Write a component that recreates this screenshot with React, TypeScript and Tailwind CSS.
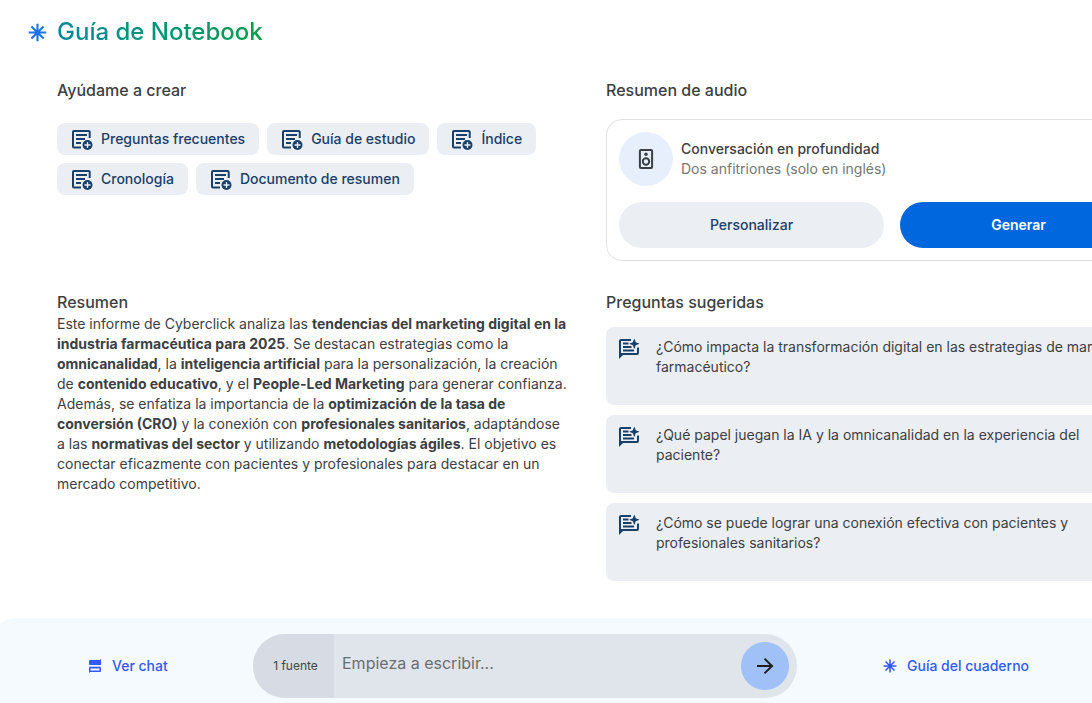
import React from "react";

function Asterisk({ className }: { className: string }) {
  return (
    <svg viewBox="0 0 20 20" className={className} fill="none" stroke="currentColor" strokeWidth="2.2" aria-hidden="true">
      <path d="M10 .8v18.4M.8 10h18.4M3.6 3.6l12.8 12.8M16.4 3.6L3.6 16.4" />
    </svg>
  );
}

function NoteAddIcon() {
  return (
    <svg viewBox="0 0 22 22" className="size-[22px] shrink-0" fill="none" aria-hidden="true">
      <path d="M18.700 10V4a1 1 0 0 0-1-1H3a1 1 0 0 0-1 1v14.500a1 1 0 0 0 1 1h7" stroke="currentColor" strokeWidth="2" />
      <path d="M5 7h11M5 11h9M5 15h5" stroke="currentColor" strokeWidth="2" />
      <circle cx="16.500" cy="17" r="5" fill="currentColor" />
      <path d="M16.500 14v6M13.500 17h6" stroke="#edf0f5" strokeWidth="1.300" />
    </svg>
  );
}

function ChatSparkIcon() {
  return (
    <svg viewBox="0 0 22 22" className="size-[22px] shrink-0" fill="none" aria-hidden="true">
      <path d="M13 3H3a1 1 0 0 0-1 1v14l2-1h15a1 1 0 0 0 1-1v-5.500" stroke="currentColor" strokeWidth="2" />
      <path d="M1 16v6l4.500-4.500z" fill="currentColor" />
      <path d="M5 6.500h5.500M5 10h8.500M5 13.500h11" stroke="currentColor" strokeWidth="2" />
      <path d="M16.300 1.500l1.500 3.700 3.700 1.500-3.700 1.500-1.500 3.700-1.500-3.700-3.700-1.500 3.700-1.500z" fill="currentColor" />
    </svg>
  );
}

function SpeakerIcon() {
  return (
    <svg viewBox="0 0 16 22" className="h-[22px] w-4" fill="none" stroke="currentColor" strokeWidth="2" aria-hidden="true">
      <rect x="1.900" y="1.900" width="12.200" height="18.200" rx="1" />
      <circle cx="8" cy="13.500" r="3.200" />
      <circle cx="8" cy="6.300" r="1.700" fill="currentColor" stroke="none" />
    </svg>
  );
}

function ChatStackIcon() {
  return (
    <svg viewBox="0 0 14 14" className="size-3.5" fill="currentColor" aria-hidden="true">
      <path d="M13 0v6H2a1 1 0 0 1-1-1V2a1 1 0 0 1 1-1h9.500z" />
      <path d="M1 7h12v1H1z" opacity=".3" />
      <path fillRule="evenodd" d="M1 14V9a1 1 0 0 1 1-1h10a1 1 0 0 1 1 1v3a1 1 0 0 1-1 1H2.200zM2.500 9.600v1.800h9V9.600z" />
    </svg>
  );
}

const chips = ["Preguntas frecuentes", "Guía de estudio", "Índice", "Cronología", "Documento de resumen"];

const questions = [
  "¿Cómo impacta la transformación digital en las estrategias de marketing farmacéutico?",
  "¿Qué papel juegan la IA y la omnicanalidad en la experiencia del paciente?",
  "¿Cómo se puede lograr una conexión efectiva con pacientes y profesionales sanitarios?",
];

export default function App() {
  return (
    <div className="flex min-h-screen flex-col overflow-x-hidden bg-white font-['Inter','Liberation_Sans',sans-serif] text-sm text-[#3c4043]">
      <header className="flex h-16 items-center gap-2.5 pl-7">
        <Asterisk className="size-[19px] text-[#1a73e8]" />
        <h1 className="bg-linear-to-r from-[#078a9b] to-[#0a9e47] bg-clip-text text-2xl font-medium text-transparent">
          Guía de Notebook
        </h1>
      </header>

      <main className="-mr-[86px] grid flex-1 grid-cols-[minmax(0,1fr)_572px] grid-rows-[auto_1fr] gap-x-8 pt-3.5 pl-[57px]">
        <section className="pb-[29px]">
          <h2 className="text-base leading-6 font-medium">Ayúdame a crear</h2>
          <div className="mt-[21px] flex flex-wrap gap-2">
            {chips.map((c) => (
              <button key={c} className="flex h-8 items-center gap-2 rounded-lg bg-[#ebeef3] px-3.5 font-medium text-[#194069]">
                <NoteAddIcon />
                {c}
              </button>
            ))}
          </div>
        </section>

        <section className="pb-[29px]">
          <h2 className="text-base leading-6 font-medium">Resumen de audio</h2>
          <div className="mt-[17px] rounded-2xl border border-[#dfe1e3] p-3">
            <div className="flex items-center gap-2">
              <span className="grid size-[54px] place-items-center rounded-full bg-[#e8effc]">
                <SpeakerIcon />
              </span>
              <div className="leading-5">
                <h3 className="font-medium">Conversación en profundidad</h3>
                <p className="text-[#747775]">Dos anfitriones (solo en inglés)</p>
              </div>
            </div>
            <div className="mt-4 grid grid-cols-2 gap-4 font-medium">
              <button className="h-[46px] rounded-full bg-[#ebeef3] text-[#194069]">Personalizar</button>
              <button className="h-[46px] rounded-full bg-[#0067df] pr-7 font-semibold text-white">Generar</button>
            </div>
          </div>
        </section>

        <section>
          <h2 className="text-base leading-6 font-medium">Resumen</h2>
          <p className="pr-1 leading-5">
            Este informe de Cyberclick analiza las <b>tendencias del marketing digital en la industria farmacéutica para 2025</b>. Se
            destacan estrategias como la <b>omnicanalidad</b>, la <b>inteligencia artificial</b> para la personalización, la creación de{" "}
            <b>contenido educativo</b>, y el <b>People-Led Marketing</b> para generar confianza. Además, se enfatiza la importancia de la{" "}
            <b>optimización de la tasa de conversión (CRO)</b> y la conexión con <b>profesionales sanitarios</b>, adaptándose a las{" "}
            <b>normativas del sector</b> y utilizando <b>metodologías ágiles</b>. El objetivo es conectar eficazmente con pacientes y
            profesionales para destacar en un mercado competitivo.
          </p>
        </section>

        <section>
          <h2 className="text-base leading-6 font-medium">Preguntas sugeridas</h2>
          <div className="mt-[13px] flex flex-col gap-2.5">
            {questions.map((q) => (
              <button key={q} className="flex h-[78px] items-start gap-4 rounded-lg bg-[#ebeef3] py-2.5 pr-10 pl-3 text-left leading-5">
                <span className="text-[#194069]">
                  <ChatSparkIcon />
                </span>
                {q}
              </button>
            ))}
          </div>
        </section>
      </main>

      <footer className="grid h-[85px] grid-cols-[253px_minmax(0,1fr)_295px] items-start rounded-tl-[20px_8px] bg-[#f5faff] pt-4 font-medium text-[#3559f5]">
        <button className="flex h-16 items-center gap-2.5 pl-[88px]">
          <ChatStackIcon />
          Ver chat
        </button>
        <form className="flex h-16 items-center overflow-hidden rounded-full bg-[#dfe5eb] pr-2" onSubmit={(e) => e.preventDefault()}>
          <label htmlFor="prompt" className="flex h-full w-[81px] shrink-0 items-center justify-center bg-[#d7dce4] pl-1 text-xs font-normal text-[#444746]">
            1 fuente
          </label>
          <input
            id="prompt"
            type="text"
            placeholder="Empieza a escribir..."
            className="min-w-0 flex-1 px-2 pb-1.5 text-base font-normal text-[#3c4043] outline-none placeholder:text-[#6b6e70]"
          />
          <button aria-label="Enviar" className="grid size-12 shrink-0 place-items-center rounded-full bg-[#9fc1f8] text-[#1f1f1f]">
            <svg viewBox="0 0 18 18" className="size-[18px]" fill="none" stroke="currentColor" strokeWidth="2" aria-hidden="true">
              <path d="M1 9h15M8.500 1.600L16 9l-7.500 7.400" />
            </svg>
          </button>
        </form>
        <button className="flex h-16 items-center gap-2.5 pl-[86px]">
          <Asterisk className="size-3.5" />
          Guía del cuaderno
        </button>
      </footer>
    </div>
  );
}
